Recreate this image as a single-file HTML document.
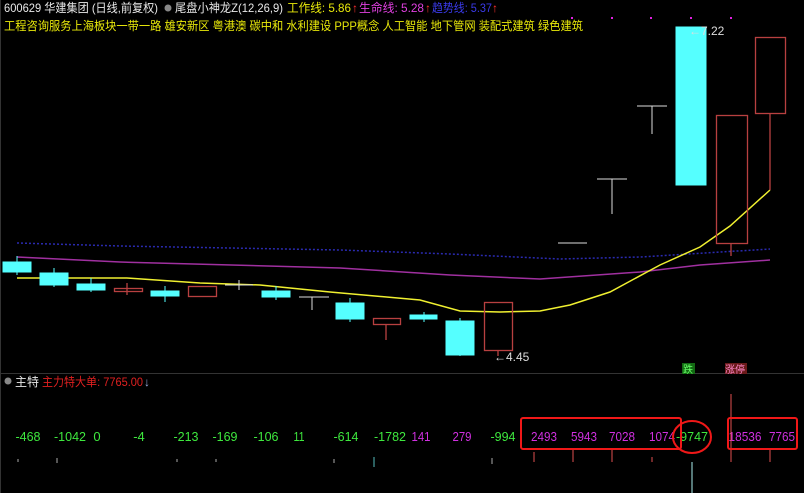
<!DOCTYPE html>
<html><head><meta charset="utf-8"><style>
html,body{margin:0;padding:0;background:#000;width:804px;height:493px;overflow:hidden}
svg{display:block}
text{font-family:"Liberation Sans","Noto Sans CJK SC",sans-serif}
</style></head><body>
<svg width="804" height="493" viewBox="0 0 804 493" xmlns="http://www.w3.org/2000/svg">
<rect width="804" height="493" fill="#000"/>
<!-- header -->
<text x="4" y="12" font-size="12" fill="#e8e8e8" textLength="154" lengthAdjust="spacingAndGlyphs">600629 华建集团 (日线,前复权)</text>
<circle cx="168" cy="8" r="3.5" fill="#888"/>
<text x="175" y="12" font-size="12" fill="#e8e8e8" textLength="108" lengthAdjust="spacingAndGlyphs">尾盘小神龙Z(12,26,9)</text>
<text x="287" y="12" font-size="12" fill="#e8e80a" textLength="64" lengthAdjust="spacingAndGlyphs">工作线: 5.86</text><text x="352" y="12" font-size="12" fill="#ff3030">↑</text>
<text x="359" y="12" font-size="12" fill="#e040e0" textLength="65" lengthAdjust="spacingAndGlyphs">生命线: 5.28</text><text x="425" y="12" font-size="12" fill="#ff3030">↑</text>
<text x="432" y="12" font-size="12" fill="#3a3ae8" textLength="60" lengthAdjust="spacingAndGlyphs">趋势线: 5.37</text><text x="492" y="12" font-size="12" fill="#ff3030">↑</text>
<text x="4" y="30" font-size="12" fill="#e8e80a" textLength="579" lengthAdjust="spacingAndGlyphs">工程咨询服务上海板块一带一路 雄安新区 粤港澳 碳中和 水利建设 PPP概念 人工智能 地下管网 装配式建筑 绿色建筑</text>
<g fill="#e020e0"><rect x="571" y="17" width="2" height="2"/><rect x="611" y="17" width="2" height="2"/><rect x="650" y="17" width="2" height="2"/><rect x="690" y="17" width="2" height="2"/><rect x="730" y="17" width="2" height="2"/></g>
<!-- MA lines -->
<polyline points="17,243 120,246 340,250 450,254 560,259 640,257 770,249" fill="none" stroke="#2a2ab0" stroke-width="1.5" stroke-dasharray="2,2"/>
<polyline points="17,257 120,262 340,268 450,275 540,279 640,272 700,265 770,260" fill="none" stroke="#a030a0" stroke-width="1.5"/>
<polyline points="17,278 127,278 200,283 260,285 330,292 420,300 460,311 500,312 540,311 570,305 610,292 660,265 700,247 730,226 770,190" fill="none" stroke="#f0f030" stroke-width="1.5"/>
<!-- candles -->
<g stroke="#5ff" fill="#5ff">
<line x1="17" y1="256" x2="17" y2="275"/><rect x="3" y="262" width="28" height="10"/>
<line x1="54" y1="268" x2="54" y2="287"/><rect x="40" y="273" width="28" height="12"/>
<line x1="91" y1="278" x2="91" y2="292"/><rect x="77" y="284" width="28" height="6"/>
<line x1="165" y1="286" x2="165" y2="302"/><rect x="151" y="291" width="28" height="5"/>
<line x1="276" y1="286" x2="276" y2="300"/><rect x="262" y="291" width="28" height="6"/>
<line x1="350" y1="298" x2="350" y2="322"/><rect x="336" y="303" width="28" height="16"/>
<line x1="424" y1="312" x2="424" y2="322"/><rect x="410" y="315" width="27" height="4"/>
<line x1="460" y1="318" x2="460" y2="356"/><rect x="446" y="321" width="28" height="34"/>
<rect x="676" y="27" width="30" height="158"/>
</g>
<g stroke="#b84040" stroke-width="1.3" fill="none">
<line x1="127" y1="283" x2="127" y2="295"/><rect x="114.5" y="288.5" width="28" height="3"/>
<rect x="188.5" y="286.5" width="28" height="10"/>
<line x1="386" y1="325" x2="386" y2="340"/><rect x="373.5" y="318.5" width="27" height="6"/>
<line x1="498" y1="350" x2="498" y2="356"/><rect x="484.5" y="302.5" width="28" height="48"/>
<line x1="731" y1="243" x2="731" y2="256"/><rect x="716.5" y="115.5" width="31" height="128"/>
<line x1="770" y1="113" x2="770" y2="190"/><rect x="755.5" y="37.5" width="30" height="76"/>
</g>
<g stroke="#ddd" fill="none">
<line x1="239" y1="280" x2="239" y2="290"/><line x1="225" y1="285" x2="253" y2="285"/>
<line x1="312" y1="297" x2="312" y2="310"/><line x1="299" y1="297" x2="329" y2="297"/>
<line x1="558" y1="243" x2="587" y2="243"/>
<line x1="612" y1="179" x2="612" y2="214"/><line x1="597" y1="179" x2="627" y2="179"/>
<line x1="652" y1="106" x2="652" y2="134"/><line x1="637" y1="106" x2="667" y2="106"/>
</g>
<text x="494" y="361" font-size="12" fill="#ddd">←4.45</text>
<text x="689" y="35" font-size="12" fill="#ddd">←7.22</text>
<!-- separator -->
<line x1="0" y1="373.5" x2="804" y2="373.5" stroke="#333"/>
<line x1="0.5" y1="0" x2="0.5" y2="493" stroke="#333"/>
<rect x="682" y="363" width="13" height="11" fill="#136a13"/><text x="683" y="373" font-size="10" fill="#6f6">跌</text>
<rect x="725" y="363" width="22" height="11" fill="#6a1a1a"/><text x="725" y="373" font-size="10" fill="#f8c">涨停</text>
<circle cx="8" cy="381" r="3.5" fill="#888"/>
<text x="15" y="386" font-size="12" fill="#e8e8e8">主特</text>
<text x="42" y="386" font-size="12" fill="#e02020" textLength="101" lengthAdjust="spacingAndGlyphs">主力特大单: 7765.00</text>
<text x="144" y="386" font-size="12" fill="#9ad">↓</text>
<!-- numbers -->
<g font-size="13" text-anchor="middle" lengthAdjust="spacingAndGlyphs">
<g fill="#3ee83e">
<text x="28" y="441" textLength="25" lengthAdjust="spacingAndGlyphs">-468</text><text x="70" y="441" textLength="32" lengthAdjust="spacingAndGlyphs">-1042</text><text x="97" y="441">0</text><text x="139" y="441">-4</text>
<text x="186" y="441" textLength="25" lengthAdjust="spacingAndGlyphs">-213</text><text x="225" y="441" textLength="25" lengthAdjust="spacingAndGlyphs">-169</text><text x="266" y="441" textLength="25" lengthAdjust="spacingAndGlyphs">-106</text><text x="299" y="441" textLength="11" lengthAdjust="spacingAndGlyphs">11</text>
<text x="346" y="441" textLength="25" lengthAdjust="spacingAndGlyphs">-614</text><text x="390" y="441" textLength="32" lengthAdjust="spacingAndGlyphs">-1782</text><text x="503" y="441" textLength="25" lengthAdjust="spacingAndGlyphs">-994</text><text x="692" y="441" textLength="32" lengthAdjust="spacingAndGlyphs">-9747</text>
</g>
<g fill="#d030e0">
<text x="421" y="441" textLength="19" lengthAdjust="spacingAndGlyphs">141</text><text x="462" y="441" textLength="19" lengthAdjust="spacingAndGlyphs">279</text><text x="544" y="441" textLength="26" lengthAdjust="spacingAndGlyphs">2493</text><text x="584" y="441" textLength="26" lengthAdjust="spacingAndGlyphs">5943</text>
<text x="622" y="441" textLength="26" lengthAdjust="spacingAndGlyphs">7028</text><text x="662" y="441" textLength="26" lengthAdjust="spacingAndGlyphs">1074</text><text x="745" y="441" textLength="33" lengthAdjust="spacingAndGlyphs">18536</text><text x="782" y="441" textLength="26" lengthAdjust="spacingAndGlyphs">7765</text>
</g>
</g>
<!-- bars -->
<g stroke="#e05050">
<line x1="534" y1="452" x2="534" y2="462"/><line x1="573" y1="448" x2="573" y2="462"/><line x1="612" y1="448" x2="612" y2="462"/>
<line x1="652" y1="457" x2="652" y2="462"/><line x1="731" y1="394" x2="731" y2="462"/><line x1="770" y1="448" x2="770" y2="462"/>
</g>
<g stroke="#aaa"><line x1="18" y1="459" x2="18" y2="462"/><line x1="57" y1="458" x2="57" y2="463"/><line x1="177" y1="459" x2="177" y2="462"/><line x1="216" y1="459" x2="216" y2="462"/><line x1="334" y1="459" x2="334" y2="463"/><line x1="492" y1="458" x2="492" y2="464"/></g>
<line x1="374" y1="457" x2="374" y2="467" stroke="#5bb"/>
<line x1="692" y1="462" x2="692" y2="493" stroke="#aee"/>
<!-- annotations -->
<rect x="521" y="418" width="160" height="31" rx="2" fill="none" stroke="#f01818" stroke-width="2"/>
<ellipse cx="692" cy="437" rx="19" ry="16" fill="none" stroke="#f01818" stroke-width="2"/>
<rect x="728" y="418" width="69" height="31" rx="2" fill="none" stroke="#f01818" stroke-width="2"/>
</svg>
</body></html>
